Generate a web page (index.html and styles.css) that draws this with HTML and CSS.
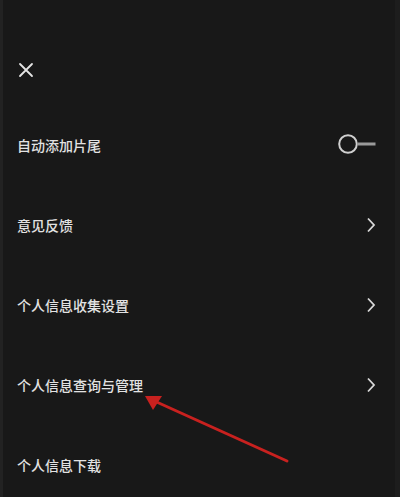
FILE: index.html
```html
<!DOCTYPE html>
<html lang="zh">
<head>
<meta charset="utf-8">
<link rel="stylesheet" href="styles.css">
</head>
<body>
<div class="screen">
  <header class="header">
    <svg class="close" width="16" height="16" viewBox="0 0 16 16">
      <path d="M2 2 L14 14 M14 2 L2 14" stroke="#e4e4e4" stroke-width="1.8" stroke-linecap="round"/>
    </svg>
  </header>
  <ul class="list">
    <li class="row">
      <span class="label">自动添加片尾</span>
      <svg class="toggle" width="40" height="22" viewBox="0 0 40 22">
        <circle cx="10" cy="11" r="8.8" fill="none" stroke="#cfcfcf" stroke-width="2"/>
        <rect x="19.5" y="9.5" width="18" height="3" fill="#9a9a9a"/>
      </svg>
    </li>
    <li class="row">
      <span class="label">意见反馈</span>
      <svg class="chev" width="10" height="16" viewBox="0 0 10 16">
        <path d="M2 1.5 L8 8 L2 14.5" fill="none" stroke="#d8d8d8" stroke-width="1.8"/>
      </svg>
    </li>
    <li class="row">
      <span class="label">个人信息收集设置</span>
      <svg class="chev" width="10" height="16" viewBox="0 0 10 16">
        <path d="M2 1.5 L8 8 L2 14.5" fill="none" stroke="#d8d8d8" stroke-width="1.8"/>
      </svg>
    </li>
    <li class="row">
      <span class="label">个人信息查询与管理</span>
      <svg class="chev" width="10" height="16" viewBox="0 0 10 16">
        <path d="M2 1.5 L8 8 L2 14.5" fill="none" stroke="#d8d8d8" stroke-width="1.8"/>
      </svg>
    </li>
    <li class="row">
      <span class="label">个人信息下载</span>
    </li>
  </ul>
  <svg class="arrow" width="400" height="497" viewBox="0 0 400 497">
    <path d="M287 461 L150 399" stroke="#c8211f" stroke-width="3" stroke-linecap="round"/>
    <path d="M145 396 L162 396 L153 410 Z" fill="#c8211f"/>
  </svg>
</div>
</body>
</html>
```
FILE: styles.css
```css
html, body {
  margin: 0;
  padding: 0;
  background: #181818;
}
.screen {
  position: relative;
  width: 400px;
  height: 497px;
  box-sizing: border-box;
  border-left: 3px solid #222222;
  border-right: 5px solid #1d1d1d;
  overflow: hidden;
  font-family: "Noto Sans CJK SC", "Noto Sans", sans-serif;
}
.header {
  height: 105px;
  padding-left: 15px;
  padding-top: 62px;
  box-sizing: border-box;
}
.close {
  display: block;
}
.list {
  list-style: none;
  margin: 0;
  padding: 0;
}
.row {
  height: 80px;
  display: flex;
  align-items: center;
  justify-content: space-between;
  padding-left: 14px;
  padding-right: 18px;
}
.label {
  font-size: 14px;
  font-weight: 500;
  color: #e2e2e2;
  margin-top: -1px;
}
.toggle {
  display: block;
  margin-right: -1px;
  margin-top: -2px;
}
.chev {
  display: block;
  margin-right: 1px;
}
.arrow {
  position: absolute;
  left: -3px;
  top: 0;
  pointer-events: none;
}
```
